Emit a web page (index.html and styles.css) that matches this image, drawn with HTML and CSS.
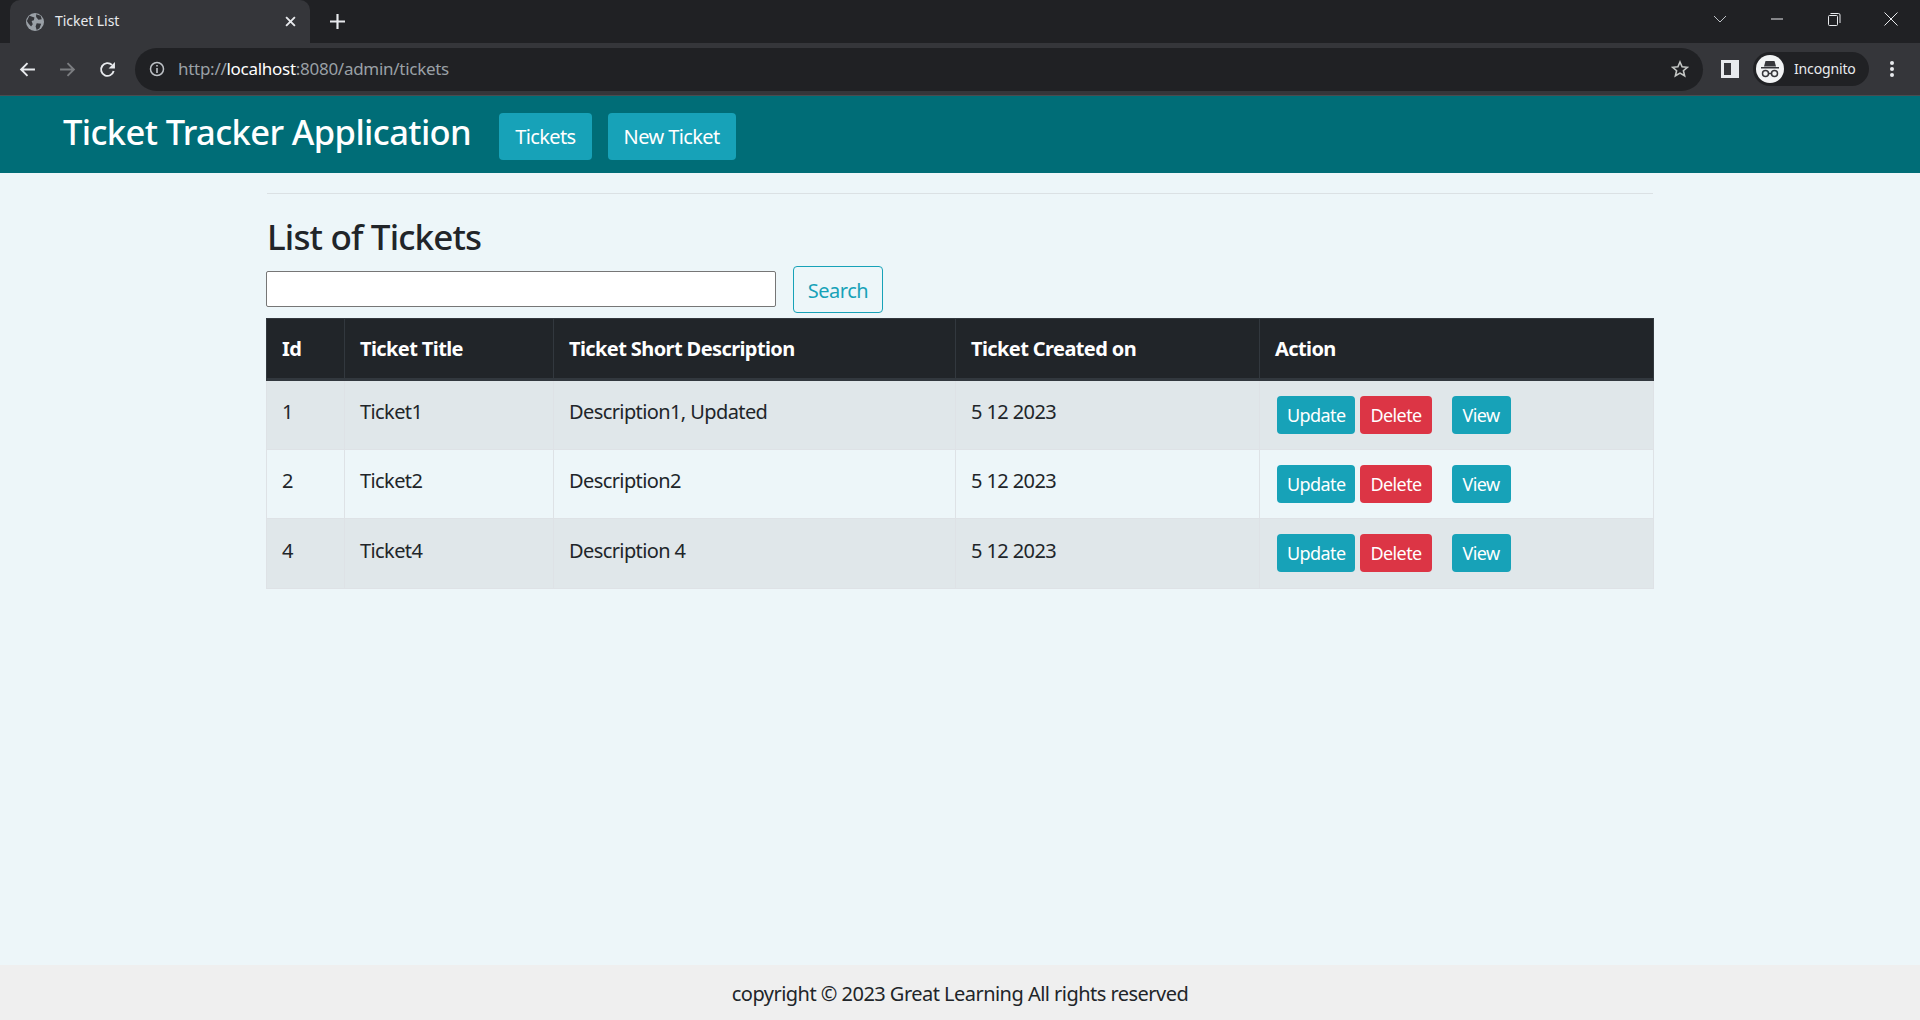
FILE: index.html
```html
<!DOCTYPE html>
<html lang="en">
<head>
<meta charset="utf-8">
<title>Ticket List</title>
<link rel="stylesheet" href="styles.css">
</head>
<body>
<div class="tabstrip">
  <div class="tab">
    <svg class="favicon" viewBox="0 0 16 16"><circle cx="8" cy="8" r="8" fill="#9aa0a6"/><path d="M3 2.500 7.500 4 7 6.500 5 7 6 10 4.500 12 2 9 .8 7ZM9 1l4 1.500 1 3-3 .5-2-2.500ZM9.500 9l4 .5-1.500 4-2.500 1.500-1-3Z" fill="#35363a"/></svg>
    <span class="tab-title">Ticket List</span>
    <svg class="tab-close" viewBox="0 0 10 10"><path d="M1 1l8 8M9 1l-8 8" stroke="#e8eaed" stroke-width="1.700"/></svg>
  </div>
  <svg class="new-tab" viewBox="0 0 14 14"><path d="M7 0v14M0 7h14" stroke="#e8eaed" stroke-width="2"/></svg>
  <div class="window-controls">
    <svg class="win" viewBox="0 0 14 14"><path d="M1 4l6 6 6-6" stroke="#bdc1c6" fill="none"/></svg>
    <svg class="win" viewBox="0 0 14 14"><path d="M1 7h12" stroke="#e8eaed" stroke-width="1"/></svg>
    <svg class="win" viewBox="0 0 14 14"><path d="M1.500 4.500a1 1 0 0 1 1-1h7a1 1 0 0 1 1 1v8a1 1 0 0 1-1 1h-7a1 1 0 0 1-1-1ZM3.500 1.500h8a1.500 1.500 0 0 1 1.500 1.500v8" stroke="#e8eaed" fill="none"/></svg>
    <svg class="win" viewBox="0 0 14 14"><path d="M.5.500l13 13M13.500.500l-13 13" stroke="#e8eaed" fill="none"/></svg>
  </div>
</div>
<div class="toolbar">
  <svg class="tool" viewBox="0 0 16 16"><path d="M15 8H2M8 2 2 8l6 6" stroke="#e8eaed" stroke-width="1.800" fill="none"/></svg>
  <svg class="tool" viewBox="0 0 16 16"><path d="M1 8h13M8 2l6 6-6 6" stroke="#7b7d80" stroke-width="1.800" fill="none"/></svg>
  <svg class="tool" viewBox="0 0 16 16"><path d="M13.800 9.500A6 6 0 1 1 12.200 3.700" stroke="#e8eaed" stroke-width="1.800" fill="none"/><path d="M15 1v6H9Z" fill="#e8eaed"/></svg>
  <div class="omnibox">
    <svg class="info" viewBox="0 0 16 16"><circle cx="8" cy="8" r="6.500" stroke="#bdc1c6" stroke-width="1.500" fill="none"/><path d="M8 7v5M8 4v1.600" stroke="#bdc1c6" stroke-width="1.600"/></svg>
    <span class="url"><span class="dim">http://</span>localhost<span class="dim">:8080/admin/tickets</span></span>
    <svg class="star" viewBox="0 0 18 18"><path d="M9 2l2.100 4.800 5.200.5-3.900 3.400 1.200 5.100L9 13.100l-4.600 2.700 1.200-5.100-3.900-3.400 5.200-.5Z" stroke="#c4c7c5" stroke-width="1.600" fill="none"/></svg>
  </div>
  <svg class="panel" viewBox="0 0 18 18"><path fill-rule="evenodd" d="M0 0h18v18H0ZM3 3v12h7V3Z" fill="#e8eaed"/></svg>
  <div class="profile">
    <svg class="avatar" viewBox="0 0 28 28"><circle cx="14" cy="14" r="14" fill="#f1f3f4"/><path d="M9.500 6h9l1.500 5.500H8ZM5 12h18v1.500H5Z" fill="#35363a"/><circle cx="9.500" cy="18.500" r="3" stroke="#35363a" stroke-width="1.500" fill="none"/><circle cx="18.500" cy="18.500" r="3" stroke="#35363a" stroke-width="1.500" fill="none"/><path d="M12.500 18.500h3" stroke="#35363a" stroke-width="1.500"/></svg>
    <span class="profile-name">Incognito</span>
  </div>
  <svg class="menu" viewBox="0 0 4 18"><circle cx="2" cy="3" r="2" fill="#e8eaed"/><circle cx="2" cy="9" r="2" fill="#e8eaed"/><circle cx="2" cy="15" r="2" fill="#e8eaed"/></svg>
</div>
<nav class="navbar">
  <span class="brand">Ticket Tracker Application</span>
  <a class="btn nav-btn">Tickets</a>
  <a class="btn nav-btn">New Ticket</a>
</nav>
<main class="content">
  <hr class="rule">
  <h1 class="page-title">List of Tickets</h1>
  <form class="search">
    <input class="search-input" type="text">
    <button class="search-btn" type="button">Search</button>
  </form>
  <table class="tickets">
    <thead>
      <tr><th class="c1">Id</th><th class="c2">Ticket Title</th><th class="c3">Ticket Short Description</th><th class="c4">Ticket Created on</th><th>Action</th></tr>
    </thead>
    <tbody>
      <tr class="row-a"><td>1</td><td>Ticket1</td><td>Description1, Updated</td><td>5 12 2023</td><td class="actions"><a class="btn small info-btn">Update</a><a class="btn small danger">Delete</a><a class="btn small info-btn view">View</a></td></tr>
      <tr class="row-b"><td>2</td><td>Ticket2</td><td>Description2</td><td>5 12 2023</td><td class="actions"><a class="btn small info-btn">Update</a><a class="btn small danger">Delete</a><a class="btn small info-btn view">View</a></td></tr>
      <tr class="row-a"><td>4</td><td>Ticket4</td><td>Description 4</td><td>5 12 2023</td><td class="actions"><a class="btn small info-btn">Update</a><a class="btn small danger">Delete</a><a class="btn small info-btn view">View</a></td></tr>
    </tbody>
  </table>
</main>
<footer class="footer">copyright © 2023 Great Learning All rights reserved</footer>
</body>
</html>
```
FILE: styles.css
```css
* { box-sizing: border-box; }
html, body { margin: 0; height: 100%; }
body {
  display: flex;
  flex-direction: column;
  height: 100vh;
  overflow: hidden;
  font-family: "Noto Sans", "Open Sans", sans-serif;
  color: #212529;
  background: #edf6f9;
}
svg { display: block; flex: none; }

.tabstrip { height: 43px; background: #202124; display: flex; align-items: center; padding-left: 10px; flex: none; }
.tab { width: 300px; height: 43px; background: #35363a; border-radius: 10px 10px 0 0; display: flex; align-items: center; padding: 0 14px 0 16px; }
.favicon { width: 18px; height: 18px; }
.tab-title { flex: 1; margin-left: 11px; margin-bottom: 2px; font-size: 14px; letter-spacing: -.05px; color: #e8eaed; }
.tab-close { width: 11px; height: 11px; }
.new-tab { width: 15px; height: 15px; margin-left: 20px; }
.window-controls { margin-left: auto; display: flex; align-items: center; gap: 43px; padding: 0 22px 6px 0; }
.win { width: 14px; height: 14px; }

.toolbar { height: 53px; background: #35363a; display: flex; align-items: center; padding-left: 19px; flex: none; border-bottom: 1px solid #4a4c50; }
.tool { width: 17px; height: 17px; margin-right: 23px; }
.tool:nth-child(3) { margin-right: 19px; }
.omnibox { width: 1568px; height: 43px; border-radius: 22px; background: #202124; display: flex; align-items: center; padding: 0 14px; }
.info { width: 16px; height: 16px; }
.url { flex: 1; margin-left: 13px; margin-bottom: 1px; font-size: 17px; letter-spacing: -.28px; color: #fff; }
.dim { color: #9aa0a6; }
.star { width: 18px; height: 18px; }
.panel { width: 18px; height: 18px; margin-left: 18px; }
.profile { width: 116px; height: 34px; margin-left: 14px; border-radius: 17px; background: #202124; display: flex; align-items: center; padding-left: 3px; }
.avatar { width: 28px; height: 28px; }
.profile-name { margin-left: 10px; margin-bottom: 1px; font-size: 14px; letter-spacing: -.15px; color: #e8eaed; }
.menu { width: 4px; height: 18px; margin-left: 21px; }

.navbar { height: 77px; background: #006d77; display: flex; align-items: center; padding: 4px 0 0 63px; flex: none; }
.brand { font-size: 34.500px; font-weight: 500; color: #fff; letter-spacing: -.6px; margin-right: 28px; position: relative; top: -5px; }
.btn { display: inline-flex; align-items: center; justify-content: center; border-radius: 4px; color: #fff; }
.nav-btn { height: 47px; padding: 0 16px; font-size: 20px; letter-spacing: -.6px; background: #17a2b8; margin-right: 16px; }

.content { flex: 1; width: 1388px; margin: 0 auto; padding-top: 20px; }
.rule { margin: 0 1px; border: 0; border-top: 1px solid #dbe1e4; }
.page-title { margin: 20px 1px 0; font-size: 35px; line-height: 46px; font-weight: 500; letter-spacing: -.85px; }
.search { display: flex; align-items: center; height: 47px; margin-top: 6px; }
.search-input { width: 510px; height: 36px; margin-bottom: 2px; border: 1px solid #767676; border-radius: 2px; background: #fff; }
.search-btn { width: 90px; height: 47px; margin-left: 17px; padding-top: 2px; border: 1px solid #17a2b8; border-radius: 4px; background: transparent; color: #17a2b8; font: inherit; font-size: 20px; letter-spacing: -.5px; }

.tickets { width: 1388px; margin-top: 5px; border-collapse: collapse; table-layout: fixed; font-size: 20px; letter-spacing: -.6px; }
.tickets th, .tickets td { border: 1px solid #dee2e6; padding: 0 15px; text-align: left; }
.tickets th { height: 61px; padding-bottom: 1px; background: #212529; color: #fff; border-color: #32383e; border-bottom-width: 3px; font-size: 20px; font-weight: 700; }
.tickets td { height: 69.500px; padding-bottom: 6px; }
.c1 { width: 78px; }
.c2 { width: 209px; }
.c3 { width: 402px; }
.c4 { width: 304px; }
.row-a { background: #e0e7ea; }
.row-b { background: #edf6f9; }
.tickets .actions { white-space: nowrap; padding-left: 17px; }
.small { height: 38px; padding: 0 10px; font-size: 18px; letter-spacing: -.6px; position: relative; top: 3px; }
.info-btn { background: #17a2b8; }
.danger { background: #dc3545; margin-left: 5px; }
.view { margin-left: 20px; padding: 0 11px; }

.footer { height: 55px; flex: none; padding-top: 2px; background: #efefef; display: flex; align-items: center; justify-content: center; font-size: 20px; letter-spacing: -.53px; }
```
